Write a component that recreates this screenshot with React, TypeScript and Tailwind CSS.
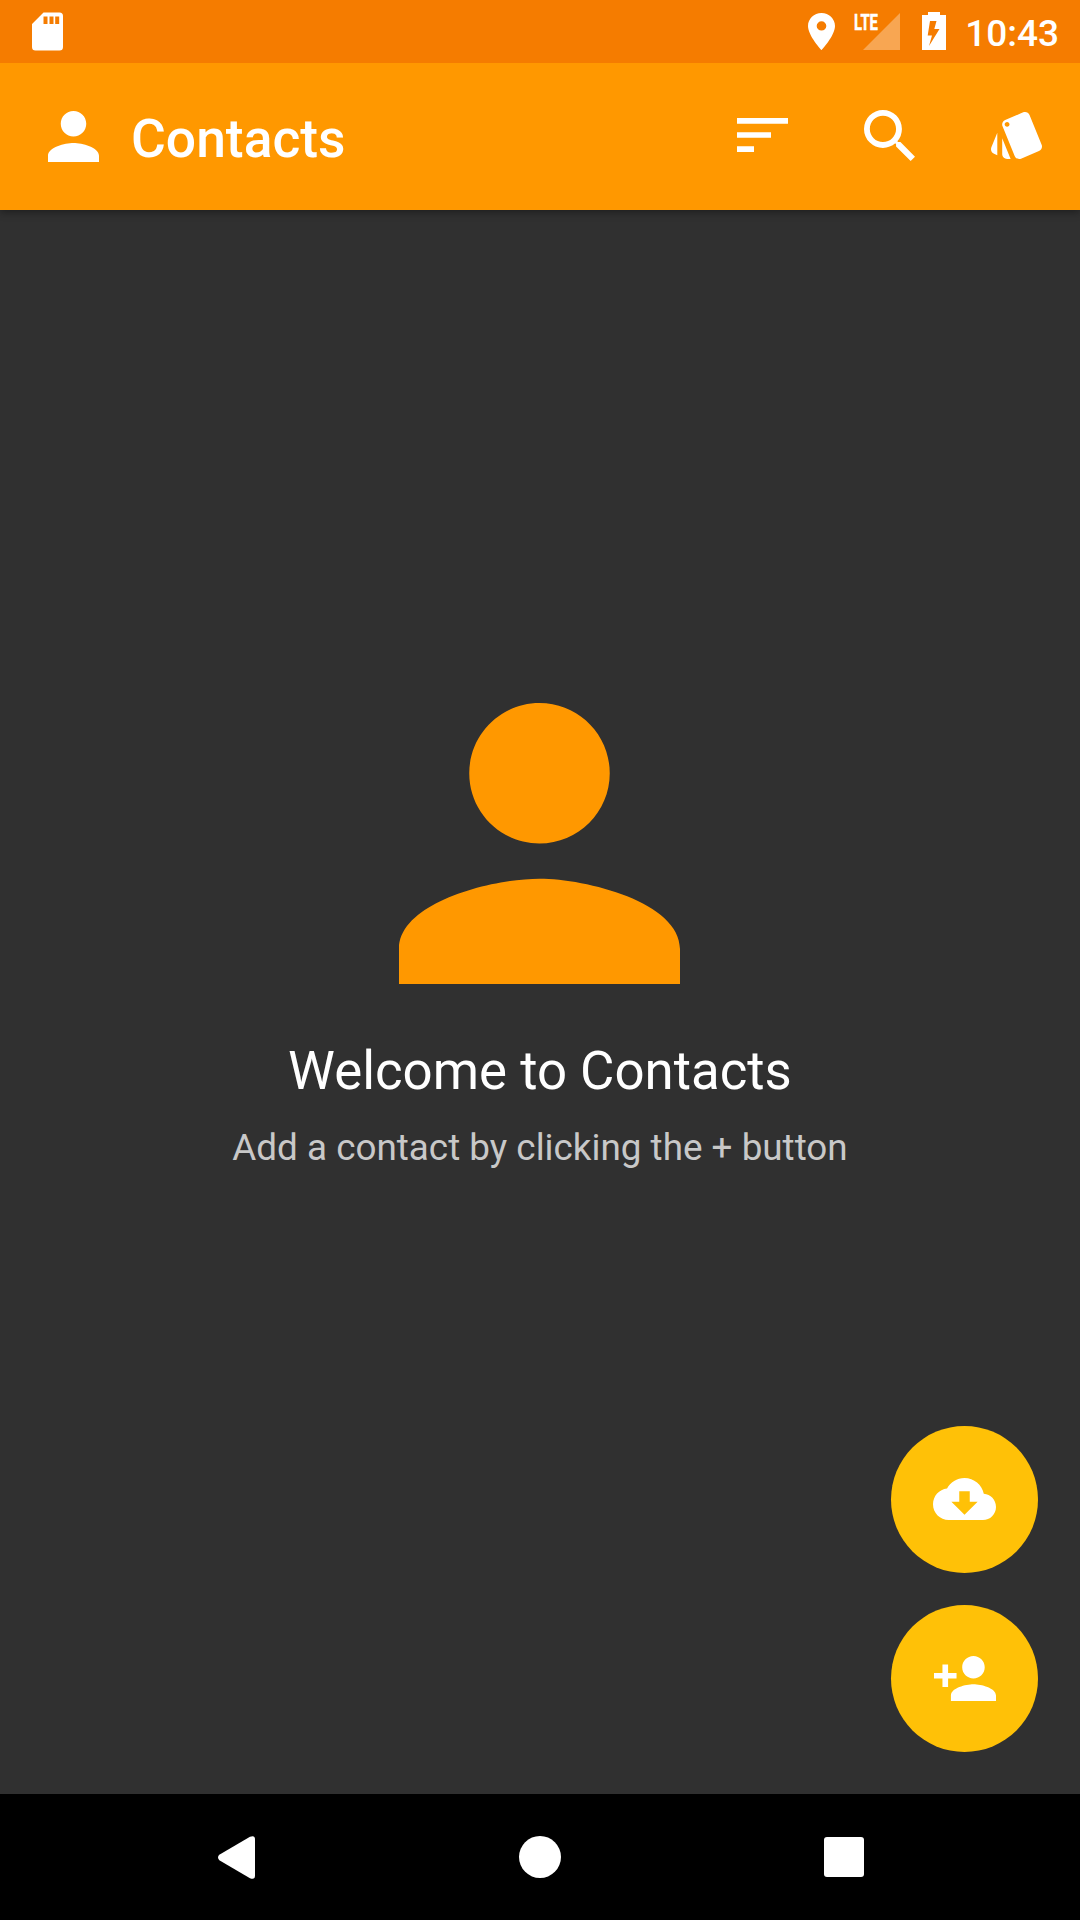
import React from "react";

type IconProps = { className: string; viewBox: string; d: string };

const Icon = ({ className, viewBox, d }: IconProps) => (
  <svg className={className} viewBox={viewBox} preserveAspectRatio="none" fill="currentColor" fillRule="evenodd" aria-hidden="true">
    <path d={d} />
  </svg>
);

const PERSON =
  "M12 12c2.21 0 4-1.79 4-4s-1.79-4-4-4-4 1.79-4 4 1.79 4 4 4zm0 2c-2.67 0-8 1.34-8 4v2h16v-2c0-2.66-5.33-4-8-4z";
const SORT = "M3 18h6v-2H3v2zM3 6v2h18V6H3zm0 7h12v-2H3v2z";
const SEARCH =
  "M15.5 14h-.79l-.28-.27A6.471 6.471 0 0 0 16 9.5 6.5 6.5 0 1 0 9.5 16c1.61 0 3.09-.59 4.23-1.57l.27.28v.79l5 4.99L20.49 19l-4.99-5zm-6 0C7.01 14 5 11.99 5 9.5S7.01 5 9.5 5 14 7.01 14 9.5 11.99 14 9.5 14z";
const STYLE =
  "M2.53 19.65l1.34.56v-9.03l-2.43 5.86c-.41 1.02.08 2.19 1.09 2.61zm19.5-3.7L17.07 3.98c-.31-.75-1.04-1.21-1.81-1.23-.26 0-.53.04-.79.15L7.1 5.95c-.75.31-1.21 1.03-1.23 1.8-.01.27.04.54.15.8l4.96 11.97c.31.76 1.05 1.22 1.83 1.23.26 0 .52-.05.77-.15l7.36-3.05c1.02-.42 1.51-1.59 1.09-2.6zM7.88 8.75c-.55 0-1-.45-1-1s.45-1 1-1 1 .45 1 1-.45 1-1 1zm-2 11c0 1.1.9 2 2 2h1.45l-3.45-8.34v6.34z";
const PLACE =
  "M12 2C8.13 2 5 5.13 5 9c0 5.25 7 13 7 13s7-7.75 7-13c0-3.87-3.13-7-7-7zm0 9.5a2.5 2.5 0 0 1 0-5 2.5 2.5 0 0 1 0 5z";
const CLOUD_DOWNLOAD =
  "M19.35 10.04C18.67 6.59 15.64 4 12 4 9.11 4 6.6 5.64 5.35 8.04 2.34 8.36 0 10.91 0 14c0 3.31 2.69 6 6 6h13c2.76 0 5-2.24 5-5 0-2.64-2.05-4.78-4.65-4.96zM17 13l-5 5-5-5h3V9h4v4h3z";
const PERSON_ADD =
  "M15 12c2.21 0 4-1.79 4-4s-1.79-4-4-4-4 1.79-4 4 1.79 4 4 4zm-9-2V7H4v3H1v2h3v3h2v-3h3v-2H6zm9 4c-2.67 0-8 1.34-8 4v2h16v-2c0-2.66-5.33-4-8-4z";

const StatusBar = () => (
  <div className="z-20 flex h-[63px] shrink-0 items-start justify-between bg-[#f57c00] pl-8 pr-[22px] text-white">
    <Icon
      className="mt-3 h-[39px] w-[31px]"
      viewBox="0 0 31 39"
      d="M11.500 .5H27.500a3.500 3.500 0 0 1 3.500 3.500V35a3.500 3.500 0 0 1-3.500 3.500H3.500A3.500 3.500 0 0 1 0 35V12zM11.500 4.500v7.500h4v-7.500zM17.500 4.500v7.500h4v-7.500zM23.200 4.500v7.500h4v-7.500z"
    />
    <div className="flex items-start">
      <Icon className="mt-[13px] h-[37px] w-[27px]" viewBox="5 2 14 20" d={PLACE} />
      <svg className="ml-[17px] mt-1 h-[48px] w-[50px]" viewBox="-1 -8 50 48" aria-hidden="true">
        <path d="M47 1V38H10z" fill="#fff" fillOpacity="0.32" />
        <text
          x="1"
          y="18"
          fill="#fff"
          stroke="#fff"
          strokeWidth="0.500"
          fontFamily="Roboto, sans-serif"
          fontWeight="700"
          fontSize="22"
          textLength="24"
          lengthAdjust="spacingAndGlyphs"
        >
          LTE
        </text>
      </svg>
      <Icon
        className="ml-5 mt-3 h-[38px] w-6"
        viewBox="0 0 24 38"
        d="M6 0H18V3H24V38H0V3H6zM8 9H14.500L12.300 17H17.500L7 34L10 23.500H5.700z"
      />
      <span className="-mr-px ml-[19px] mt-3 text-[37px] font-medium leading-[43px]">10:43</span>
    </div>
  </div>
);

const AppBar = () => (
  <header className="z-10 flex h-[147px] shrink-0 items-center bg-[#ff9800] pl-12 pr-[38px] text-white shadow-[0_2px_8px_rgba(0,0,0,0.4)]">
    <Icon className="h-[51px] w-[51px]" viewBox="4 4 16 16" d={PERSON} />
    <h1 className="ml-8 grow pt-[5px] text-[53.400px] font-medium leading-[62px]">Contacts</h1>
    <div className="flex items-center gap-[76px]">
      <button className="block" aria-label="Sort">
        <Icon className="mb-[3px] h-[34px] w-[51px]" viewBox="3 6 18 12" d={SORT} />
      </button>
      <button className="block" aria-label="Search">
        <Icon className="mb-[3px] h-[51px] w-[51px]" viewBox="3 3 17.490 17.490" d={SEARCH} />
      </button>
      <button className="block" aria-label="Theme">
        <Icon className="mb-0.5 h-[47px] w-[51px]" viewBox="1.290 2.750 20.890 19" d={STYLE} />
      </button>
    </div>
  </header>
);

const Fab = ({ label, children }: { label: string; children: React.ReactNode }) => (
  <button aria-label={label} className="flex size-[147px] items-center justify-center rounded-full bg-[#ffc107] text-white">
    {children}
  </button>
);

const NavBar = () => (
  <nav className="flex h-[126px] shrink-0 items-center justify-between bg-black pl-[218px] pr-[216px] text-white">
    <Icon
      className="h-[43px] w-[37px]"
      viewBox="0 0 37 43"
      d="M1.300 18.800L32 .8Q37-1.200 37 3.500V39.500Q37 44.200 32 42.200L1.300 24.200Q-1.300 21.500 1.300 18.800z"
    />
    <div className="ml-px size-[42px] rounded-full bg-white" />
    <div className="size-10 rounded-[3px] bg-white" />
  </nav>
);

export default function App() {
  return (
    <div className="flex h-[1920px] w-[1080px] flex-col overflow-hidden bg-[#303030] font-[Roboto,sans-serif]">
      <StatusBar />
      <AppBar />
      <main className="relative flex grow flex-col items-center pt-[493px]">
        <Icon className="mr-px h-[281px] w-[281px] text-[#ff9800]" viewBox="4 4 16 16" d={PERSON} />
        <h2 className="mt-[56px] text-[52.800px] leading-[62px] text-white">Welcome to Contacts</h2>
        <p className="mt-6 text-[36.850px] leading-[43px] text-[#c8c8c8]">Add a contact by clicking the + button</p>
        <div className="absolute bottom-[42px] right-[42px] flex flex-col gap-8">
          <Fab label="Import contacts">
            <Icon className="mb-px h-[42px] w-[63px]" viewBox="0 4 24 16" d={CLOUD_DOWNLOAD} />
          </Fab>
          <Fab label="Add contact">
            <Icon className="h-[45px] w-[62px]" viewBox="1 4 22 16" d={PERSON_ADD} />
          </Fab>
        </div>
      </main>
      <NavBar />
    </div>
  );
}
